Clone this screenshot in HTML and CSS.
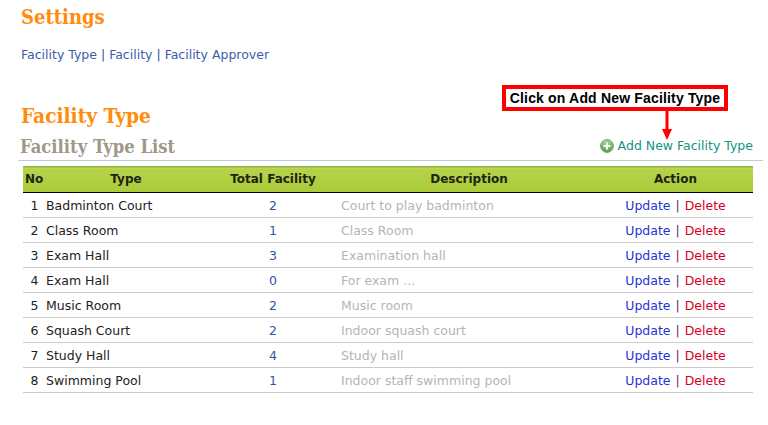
FILE: index.html
```html
<!DOCTYPE html>
<html lang="en">
<head>
  <meta charset="UTF-8" />
  <title>Settings</title>
  <link rel="stylesheet" href="styles.css">
</head>
<body>

<div class="page">
  <h1>Settings</h1>
  <div class="submenu">
    <a href="#">Facility Type</a> | <a href="#">Facility</a> | <a href="#">Facility Approver</a>
  </div>

  <h2>Facility Type</h2>
  <div class="list-head">
    <h3>Facility Type List</h3>
    <a class="add-link" href="#">
      <svg class="add-icon" width="14" height="14" viewBox="0 0 14 14">
        <defs>
          <linearGradient id="addFill" x1="0" y1="0" x2="0" y2="1">
            <stop offset="0" stop-color="#a5d49a" />
            <stop offset="1" stop-color="#4f9e48" />
          </linearGradient>
        </defs>
        <circle cx="7" cy="7" r="6.4" fill="url(#addFill)" stroke="#6ba663" />
        <path d="M7 3.6v6.8M3.6 7h6.8" stroke="#fff" stroke-width="2.2" />
      </svg>Add New Facility Type</a>
  </div>

  <table class="list">
    <thead>
      <tr>
        <th class="col-no">No</th>
        <th class="col-type">Type</th>
        <th class="col-total">Total Facility</th>
        <th class="col-desc">Description</th>
        <th class="col-action">Action</th>
      </tr>
    </thead>
    <tbody>
      <tr><td class="no">1</td><td>Badminton Court</td><td class="total">2</td><td class="desc">Court to play badminton</td><td class="action"><a class="upd" href="#">Update</a> | <a class="del" href="#">Delete</a></td></tr>
      <tr><td class="no">2</td><td>Class Room</td><td class="total">1</td><td class="desc">Class Room</td><td class="action"><a class="upd" href="#">Update</a> | <a class="del" href="#">Delete</a></td></tr>
      <tr><td class="no">3</td><td>Exam Hall</td><td class="total">3</td><td class="desc">Examination hall</td><td class="action"><a class="upd" href="#">Update</a> | <a class="del" href="#">Delete</a></td></tr>
      <tr><td class="no">4</td><td>Exam Hall</td><td class="total">0</td><td class="desc">For exam ...</td><td class="action"><a class="upd" href="#">Update</a> | <a class="del" href="#">Delete</a></td></tr>
      <tr><td class="no">5</td><td>Music Room</td><td class="total">2</td><td class="desc">Music room</td><td class="action"><a class="upd" href="#">Update</a> | <a class="del" href="#">Delete</a></td></tr>
      <tr><td class="no">6</td><td>Squash Court</td><td class="total">2</td><td class="desc">Indoor squash court</td><td class="action"><a class="upd" href="#">Update</a> | <a class="del" href="#">Delete</a></td></tr>
      <tr><td class="no">7</td><td>Study Hall</td><td class="total">4</td><td class="desc">Study hall</td><td class="action"><a class="upd" href="#">Update</a> | <a class="del" href="#">Delete</a></td></tr>
      <tr><td class="no">8</td><td>Swimming Pool</td><td class="total">1</td><td class="desc">Indoor staff swimming pool</td><td class="action"><a class="upd" href="#">Update</a> | <a class="del" href="#">Delete</a></td></tr>
    </tbody>
  </table>

  <div class="callout">Click on Add New Facility Type</div>
  <svg class="callout-arrow" width="12" height="30" viewBox="0 0 12 30">
    <path d="M4.5 0h3v19h3.5L6 30 1 19h3.5z" fill="#f00" />
  </svg>
</div>

</body>
</html>
```

FILE: styles.css
```css
body {
  margin: 0;
  background: #fff;
  font-family: "DejaVu Sans", Verdana, sans-serif;
  font-size: 12.5px;
  color: #222;
}

a {
  text-decoration: none;
}

.page {
  position: relative;
  width: 768px;
  height: 425px;
  overflow: hidden;
}

h1, h2, h3 {
  margin: 0;
  font-family: "DejaVu Serif Condensed", "DejaVu Serif", Georgia, serif;
  font-weight: bold;
}

h1 {
  padding: 5px 0 0 21px;
  font-size: 20px;
  line-height: 24px;
  color: #ff8c0a;
}

h2 {
  margin-top: 40px;
  padding-left: 21px;
  font-size: 20.7px;
  line-height: 24px;
  color: #ff8c0a;
}

h3 {
  padding-bottom: 1px;
  font-size: 18.3px;
  line-height: 24px;
  color: #a09788;
}

.submenu {
  margin-top: 17px;
  padding-left: 21px;
  line-height: 18px;
  color: #2f4f8f;
}

.submenu a {
  color: #3a5ea8;
}

.list-head {
  display: flex;
  justify-content: space-between;
  align-items: flex-end;
  margin: 0 5px 0 18px;
  padding: 0 10px 0 2px;
  border-bottom: 1px solid #bccbe0;
  height: 32px;
}

.add-link {
  display: flex;
  align-items: center;
  gap: 4px;
  padding-bottom: 7px;
  color: #12947f;
}

.add-icon {
  display: block;
}

.list {
  width: 730px;
  margin: 5px 0 0 23px;
  border-collapse: collapse;
  table-layout: fixed;
}

.list th {
  height: 26px;
  padding: 0;
  border-bottom: 1px solid #000;
  background: linear-gradient(to bottom, #94b43a 0, #94b43a 1px, #bed75a 2px, #b4d24a 4px, #abcb3a 100%);
  font-size: 12px;
  color: #1f2412;
}

.list td {
  height: 24px;
  padding: 0;
  border-bottom: 1px solid #ccc;
  color: #222;
}

.col-no { width: 23px; text-align: left; padding-left: 2px !important; box-sizing: border-box; }
.col-type { width: 160px; text-align: center; }
.col-total { width: 134px; text-align: center; }
.col-desc { width: 258px; text-align: center; }
.col-action { text-align: center; }

.list td.no {
  text-align: center;
}

.list td.total {
  text-align: center;
  color: #2f55a4;
}

.list td.desc {
  padding-left: 1px;
  color: #b5b5b5;
}

.list td.action {
  text-align: center;
  word-spacing: 1px;
  color: #6b2a6b;
}

.upd {
  color: #1f33d6;
}

.del {
  color: #d6001f;
}

.callout {
  position: absolute;
  left: 502px;
  top: 85px;
  width: 226px;
  height: 26px;
  border: 4px solid #f00;
  box-sizing: border-box;
  text-align: center;
  font-family: "Liberation Sans", Arial, sans-serif;
  font-size: 14px;
  font-weight: bold;
  letter-spacing: 0.17px;
  line-height: 19px;
  color: #000;
  background: #fff;
}

.callout-arrow {
  position: absolute;
  left: 661px;
  top: 110px;
}
```
